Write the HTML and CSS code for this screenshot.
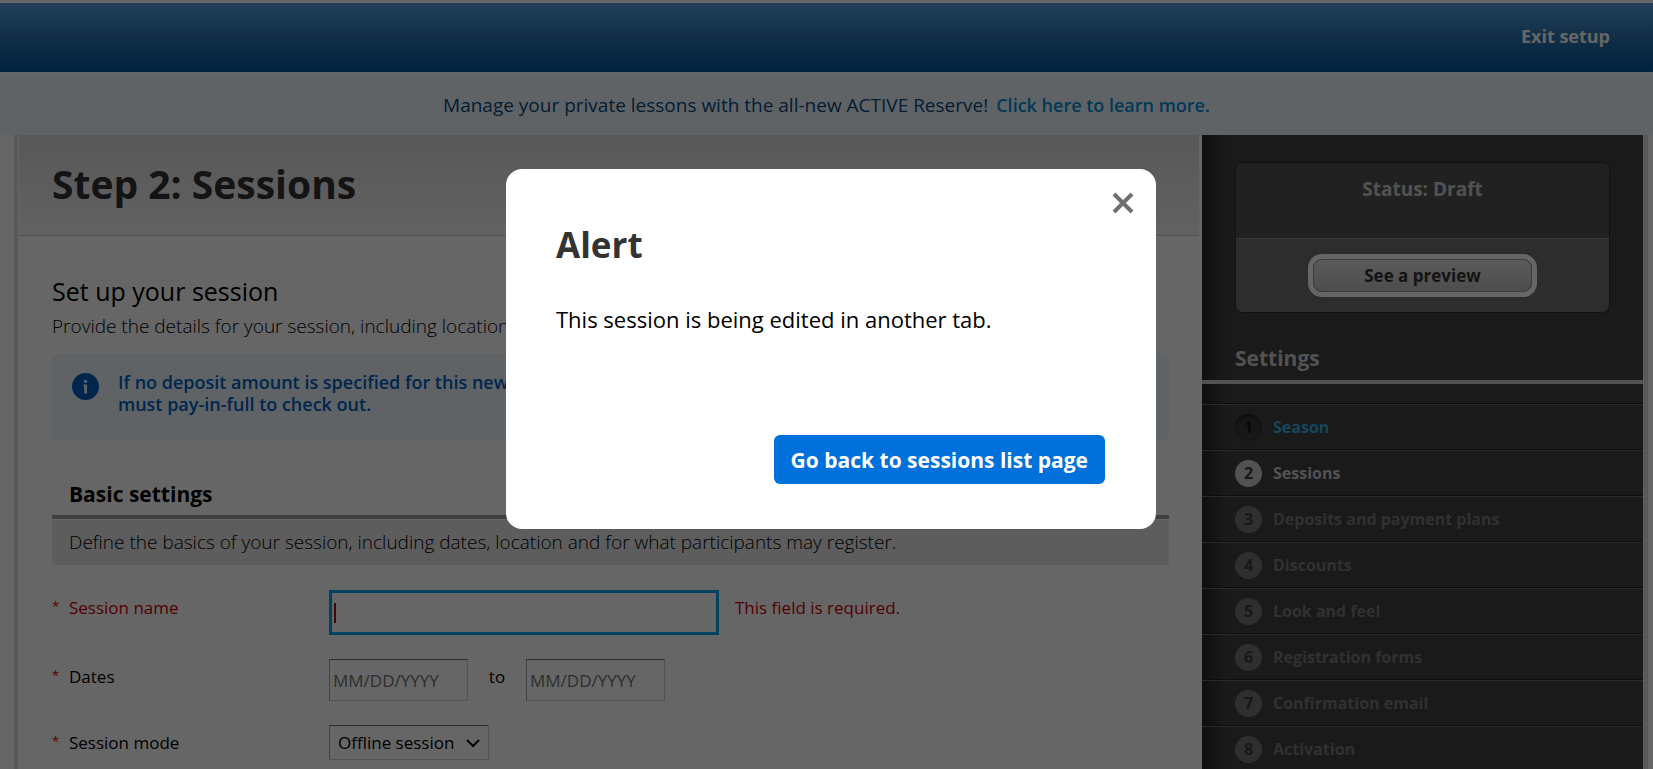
FILE: index.html
```html
<!DOCTYPE html>
<html lang="en">
<head>
  <meta charset="UTF-8">
  <title>Step 2: Sessions</title>
  <link rel="stylesheet" href="styles.css">
</head>
<body>

<header class="topbar">
  <a href="#" class="exit">Exit setup</a>
</header>

<div class="banner">
  <span>Manage your private lessons with the all-new ACTIVE Reserve!</span>
  <a href="#">Click here to learn more.</a>
</div>

<div class="wrapper">
  <main class="main">
    <div class="page-title">
      <h1>Step 2: Sessions</h1>
    </div>

    <div class="content">
      <h2>Set up your session</h2>
      <p class="intro">Provide the details for your session, including location.</p>

      <div class="info">
        <svg class="info-icon" viewBox="0 0 27 27" aria-hidden="true">
          <circle cx="13.5" cy="13.5" r="13.5" fill="#005fc4"/>
          <circle cx="13.5" cy="8.3" r="1.6" fill="#edf7ff"/>
          <path d="M11.6 11.4h3.4v9.2h-2.8v-7.2h-.6z" fill="#edf7ff"/>
        </svg>
        <p>If no deposit amount is specified for this new session,<br>must pay-in-full to check out.</p>
      </div>

      <h3>Basic settings</h3>
      <p class="section-note">Define the basics of your session, including dates, location and for what participants may register.</p>

      <form class="form">
        <div class="row error">
          <label for="sessionName"><span class="star">*</span>Session name</label>
          <input type="text" id="sessionName" class="name">
          <span class="message">This field is required.</span>
        </div>
        <div class="row">
          <label for="startDate"><span class="star">*</span>Dates</label>
          <input type="text" id="startDate" class="date" placeholder="MM/DD/YYYY">
          <label for="endDate" class="to">to</label>
          <input type="text" id="endDate" class="date" placeholder="MM/DD/YYYY">
        </div>
        <div class="row">
          <label for="sessionMode"><span class="star">*</span>Session mode</label>
          <select id="sessionMode">
            <option>Offline session</option>
          </select>
        </div>
      </form>
    </div>
  </main>

  <aside class="sidebar">
    <div class="status">
      <div class="status-text">Status: Draft</div>
      <div class="status-action">
        <button type="button" class="preview">See a preview</button>
      </div>
    </div>

    <h2 class="settings">Settings</h2>
    <ol class="steps">
      <li class="done"><span class="num">1</span><a href="#">Season</a></li>
      <li class="current"><span class="num">2</span><a href="#">Sessions</a></li>
      <li><span class="num">3</span><a href="#">Deposits and payment plans</a></li>
      <li><span class="num">4</span><a href="#">Discounts</a></li>
      <li><span class="num">5</span><a href="#">Look and feel</a></li>
      <li><span class="num">6</span><a href="#">Registration forms</a></li>
      <li><span class="num">7</span><a href="#">Confirmation email</a></li>
      <li><span class="num">8</span><a href="#">Activation</a></li>
    </ol>
  </aside>
</div>

<div class="overlay">
  <div class="modal" role="dialog" aria-labelledby="alertTitle">
    <button type="button" class="close" aria-label="Close">
      <svg viewBox="0 0 22 22" aria-hidden="true">
        <path d="M2 2l18 18M20 2L2 20" stroke="#707070" stroke-width="4" fill="none"/>
      </svg>
    </button>
    <h2 id="alertTitle">Alert</h2>
    <p>This session is being edited in another tab.</p>
    <div class="modal-actions">
      <button type="button" class="primary">Go back to sessions list page</button>
    </div>
  </div>
</div>

</body>
</html>
```
FILE: styles.css
```css
* {
  box-sizing: border-box;
}
body {
  margin: 0;
  padding-top: 3px;
  min-height: 100vh;
  display: flex;
  flex-direction: column;
  overflow: hidden;
  background: white;
  color: black;
  font-family: "Open Sans", sans-serif;
  font-size: 17px;
}
h1, h2, h3, p {
  margin: 0;
}
a {
  text-decoration: none;
}
input, select, button {
  font-family: inherit;
  font-size: 17px;
}

/* header */
.topbar {
  height: 69px;
  padding: 0 43px;
  display: flex;
  align-items: center;
  justify-content: flex-end;
  background: linear-gradient(#559edf, #2b73b0 50%, #00559d);
}
.exit {
  color: white;
  font-size: 18px;
  font-weight: 700;
  line-height: 24px;
  padding-bottom: 4px;
}
.banner {
  margin-top: 4px;
  height: 59px;
  padding-bottom: 2px;
  display: flex;
  align-items: center;
  justify-content: center;
  gap: 8px;
  background: #edf7ff;
  color: #0c4a7a;
  font-size: 19px;
}
.banner a {
  color: #0090d8;
  font-size: 18px;
  font-weight: 600;
}

/* page */
.wrapper {
  flex: 1;
  display: flex;
  margin: 0 5px 0 14px;
  border: solid #dedede;
  border-width: 0 4px;
}
.main {
  flex: 1;
  padding: 0 3px 0 1px;
}
.page-title {
  height: 101px;
  padding: 0 33px 2px;
  display: flex;
  align-items: center;
  background: linear-gradient(#dcdcdc, #f5f5f5);
  border-bottom: 1px solid #cdcdcd;
}
h1 {
  color: #333;
  font-size: 39px;
  font-weight: 700;
  line-height: 48px;
}
.content {
  padding: 38px 30px 24px 33px;
}
.content h2 {
  font-size: 25px;
  font-weight: 400;
  line-height: 34px;
}
.intro {
  font-size: 19px;
  font-weight: 300;
  line-height: 28px;
  margin-top: 4px;
}
.info {
  margin-top: 14px;
  padding: 17px 20px;
  height: 86px;
  display: flex;
  gap: 19px;
  background: #edf7ff;
  border-radius: 8px;
  color: #005fc4;
  font-size: 18px;
  font-weight: 600;
  line-height: 22px;
}
.info-icon {
  width: 27px;
  height: 27px;
  margin-top: 2px;
}
h3 {
  margin-top: 39px;
  padding: 0 17px 6px;
  font-size: 21px;
  font-weight: 700;
  line-height: 30px;
  border-bottom: 4px solid #a0a0a0;
}
.section-note {
  margin-top: 1px;
  padding: 0 17px;
  background: #e8e8e8;
  font-size: 19px;
  font-weight: 300;
  line-height: 45px;
}

/* form */
.form {
  margin-top: 25px;
  display: flex;
  flex-direction: column;
  gap: 24px;
}
.row {
  display: flex;
  line-height: 36px;
}
.row > label:first-child {
  width: 277px;
  display: flex;
}
.star {
  width: 17px;
  color: #c00;
  font-size: 13px;
  line-height: 32px;
}
.row input {
  height: 42px;
  padding: 0 3px;
  background: white;
  border: 1px solid #d0d0d0;
  border-top-color: #767676;
  border-left-color: #a9a9a9;
}
.row .date {
  width: 139px;
}
.row .date::placeholder {
  color: #757575;
}
.row .name {
  width: 390px;
  height: 45px;
  border: 3px solid #00a6f5;
  background: linear-gradient(#c00, #c00) 2px center / 2px 20px no-repeat;
}
.error, .message {
  color: #c00;
}
.message {
  margin-left: 16px;
}
.to {
  width: 58px;
  text-align: center;
}
.row select {
  width: 160px;
  height: 35px;
  padding: 0 8px;
  appearance: none;
  background: white url("data:image/svg+xml,%3Csvg xmlns='http://www.w3.org/2000/svg' width='16' height='10'%3E%3Cpath d='M2 2l6 6 6-6' fill='none' stroke='black' stroke-width='2'/%3E%3C/svg%3E") no-repeat right 7px center;
  color: black;
  border: 1px solid #d0d0d0;
  border-top-color: #767676;
  border-left-color: #a9a9a9;
  border-radius: 0;
}

/* sidebar */
.sidebar {
  width: 442px;
  padding-top: 27px;
  background: linear-gradient(to right, #282828, #414141 25px);
  border-right: 1px solid #f5f5f5;
  font-weight: 700;
}
.status {
  height: 151px;
  margin: 0 33px;
  display: flex;
  flex-direction: column;
  border: 1px solid #2b2b2b;
  border-radius: 8px;
  background: #707070;
  overflow: hidden;
}
.status-text {
  height: 76px;
  padding-top: 12px;
  background: #535353;
  border-bottom: 1px solid #919191;
  color: #cdcdcd;
  font-size: 19px;
  line-height: 28px;
  text-align: center;
}
.status-action {
  flex: 1;
  display: flex;
  align-items: center;
  justify-content: center;
}
.preview {
  width: 219px;
  height: 33px;
  padding: 0;
  background: linear-gradient(#e4e4e4, #c0c0c0);
  border: 1px solid #999;
  border-radius: 9px;
  box-shadow: 0 0 0 5px white;
  color: #333;
  font-weight: 700;
}
.settings {
  margin-top: 30px;
  padding: 0 33px 7px;
  color: #cdcdcd;
  font-size: 21px;
  line-height: 30px;
  border-bottom: 4px solid #cdcdcd;
}
.steps {
  list-style: none;
  margin: 20px 0 0;
  padding: 0;
}
.steps li {
  height: 46px;
  padding: 0 33px;
  display: flex;
  align-items: center;
  gap: 11px;
  border-top: 1px solid #696969;
  box-shadow: 0 -1px #232323;
  font-size: 16px;
}
.steps a {
  color: #7a7a7a;
  padding-bottom: 2px;
}
.num {
  width: 27px;
  height: 27px;
  border-radius: 50%;
  background: #757575;
  color: #3c3c3c;
  line-height: 27px;
  text-align: center;
}
.done .num {
  background: #3a3a3a;
  box-shadow: inset 0 2px 3px #1e1e1e;
  color: #141414;
}
.done a {
  color: #35b0e6;
}
.current .num {
  background: #cdcdcd;
}
.current a {
  color: #cdcdcd;
}

/* alert dialog */
.overlay {
  position: fixed;
  inset: 0;
  padding: 169px 0 0 9px;
  background: rgba(0,0,0,0.6);
}
.modal {
  position: relative;
  width: 650px;
  max-width: 100%;
  margin: 0 auto;
  padding: 51px 51px 45px 50px;
  background: white;
  border-radius: 16px;
}
.modal h2 {
  color: #333;
  font-size: 35px;
  font-weight: 700;
  line-height: 50px;
}
.modal p {
  margin-top: 31px;
  font-size: 22px;
  line-height: 36px;
}
.modal-actions {
  margin-top: 98px;
  display: flex;
  justify-content: flex-end;
}
.primary {
  height: 49px;
  padding: 0 17px;
  border: none;
  border-radius: 6px;
  background: #0070db;
  color: white;
  font-size: 21px;
  font-weight: 700;
  cursor: pointer;
}
.close {
  position: absolute;
  top: 23px;
  right: 22px;
  width: 22px;
  height: 22px;
  padding: 0;
  border: none;
  background: none;
  cursor: pointer;
}
.close svg {
  display: block;
}
```
